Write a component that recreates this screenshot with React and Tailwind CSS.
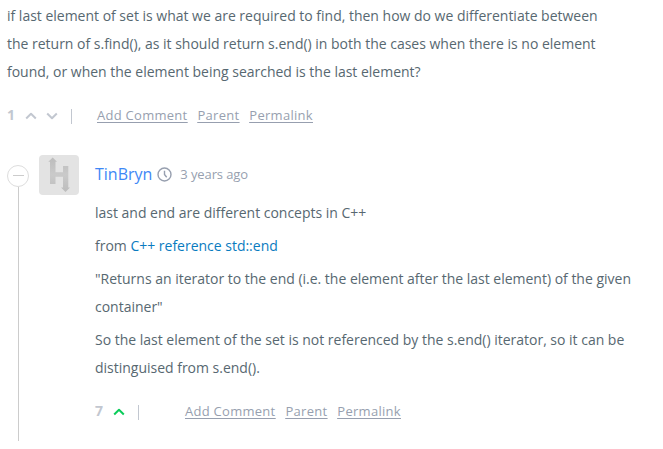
const Chevron = ({ down = false, className }) => (
  <svg width="12" height="8" viewBox="0 0 12 8" fill="none" stroke="currentColor" strokeWidth="2" strokeLinejoin="round" className={className}>
    <path d={down ? "M1.200 1.500 6 6.200 10.800 1.500" : "M1.200 6.500 6 1.800 10.800 6.500"} />
  </svg>
);

const Links = () => (
  <div className="flex gap-[10px] text-[13px] leading-5 tracking-[0.27px] text-[#979faf] underline underline-offset-2">
    <a>Add Comment</a>
    <a>Parent</a>
    <a>Permalink</a>
  </div>
);

const Avatar = () => (
  <svg width="40" height="40" viewBox="0 0 40 40" className="shrink-0">
    <defs>
      <linearGradient id="mark" x1="0" y1="0" x2="0" y2="1">
        <stop offset="0" stopColor="#bcbcbc" />
        <stop offset="0.5" stopColor="#cacaca" />
        <stop offset="1" stopColor="#bcbcbc" />
      </linearGradient>
    </defs>
    <rect width="40" height="40" rx="4" fill="#e3e3e3" />
    <path
      d="M13.700 2.500 18 6.700H16.500V17.200H24V11H29.300V32.500H31L26.500 37 22 32.500H24V21.700H16.500V29H11V6.700H9.300Z"
      fill="url(#mark)"
    />
  </svg>
);

export default function App() {
  return (
    <main className="h-[449px] w-[663px] overflow-hidden bg-white pl-[7px] pt-[2px] font-['Open_Sans',sans-serif] text-[14px] leading-7 tracking-[-0.01px] text-[#576871]">
      <p className="w-[620px]">
        if last element of set is what we are required to find, then how do we differentiate between
        <br />
        the return of s.find(), as it should return s.end() in both the cases when there is no element
        <br />
        found, or when the element being searched is the last element?
      </p>
      <div className="mt-[19px] flex h-5 items-center">
        <span className="w-[18px] text-[14px] font-bold text-[#c2c7d0]">1</span>
        <Chevron className="mt-px text-[#c2c7d0]" />
        <Chevron down className="ml-[9px] mt-px text-[#c2c7d0]" />
        <span className="ml-[13px] mr-[25px] mt-[3px] h-[15px] w-px bg-[#c2c7d0]" />
        <Links />
      </div>
      <section className="mt-[30px] flex">
        <div className="flex w-8 shrink-0 flex-col items-start pt-[10px]">
          <span className="flex size-[22px] items-center justify-center rounded-full border border-[#dddddd]">
            <span className="-mt-[2px] h-px w-[11px] bg-[#cccccc]" />
          </span>
          <span className="ml-[11px] h-[254px] w-px bg-[#cccccc]" />
        </div>
        <Avatar />
        <div className="ml-4">
          <header className="flex h-10 items-center pb-[2px]">
            <a className="text-[16px] text-[#3e87f6]">TinBryn</a>
            <svg width="15" height="15" viewBox="0 0 15 15" fill="none" stroke="#979faf" strokeWidth="1.4" className="ml-[5px]">
              <circle cx="7.500" cy="7.500" r="6.500" />
              <path d="M7.500 3.700V7.500L9.700 10.200" />
            </svg>
            <time className="ml-2 text-[13px] tracking-[-0.1px] text-[#979faf]">3 years ago</time>
          </header>
          <div className="mt-1 flex flex-col gap-[5px]">
            <p>last and end are different concepts in C++</p>
            <p>
              from <a className="text-[#097bbf]">C++ reference std::end</a>
            </p>
            <p>
              "Returns an iterator to the end (i.e. the element after the last element) of the given
              <br />
              container"
            </p>
            <p>
              So the last element of the set is not referenced by the s.end() iterator, so it can be
              <br />
              distinguised from s.end().
            </p>
          </div>
          <div className="mt-[19px] flex h-5 items-center">
            <span className="w-[18px] text-[14px] font-bold text-[#c2c7d0]">7</span>
            <Chevron className="mt-px text-[#0bcc5a]" />
            <span className="ml-[13px] mr-[46px] mt-[3px] h-[15px] w-px bg-[#c2c7d0]" />
            <Links />
          </div>
        </div>
      </section>
    </main>
  );
}
